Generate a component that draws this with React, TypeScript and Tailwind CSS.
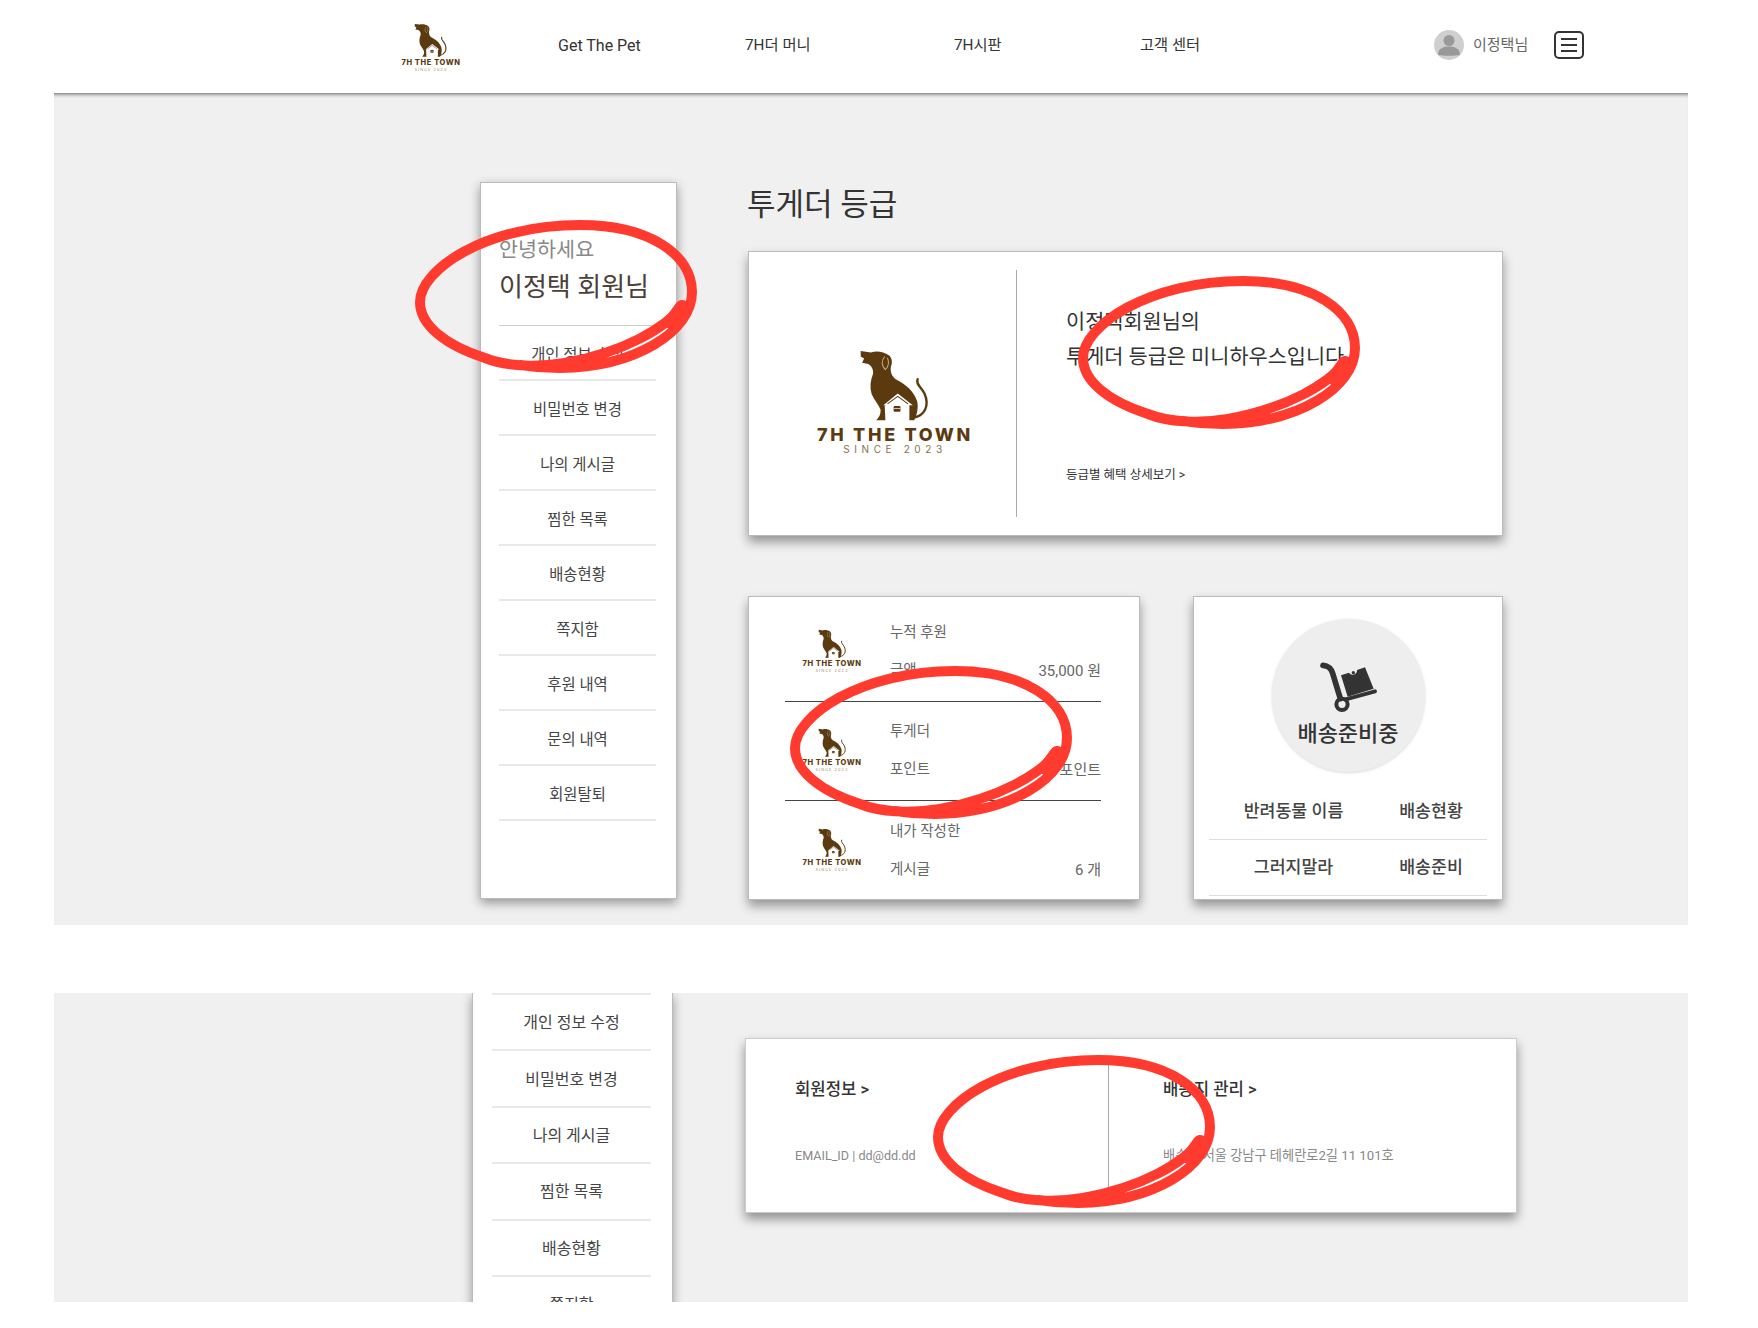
const sideMenu = ["개인 정보 수정", "비밀번호 변경", "나의 게시글", "찜한 목록", "배송현황", "쪽지함", "후원 내역", "문의 내역", "회원탈퇴"];
const lowerMenu = ["개인 정보 수정", "비밀번호 변경", "나의 게시글", "찜한 목록", "배송현황", "쪽지함"];

const stats = [
  { top: "누적 후원", label: "금액", value: "35,000 원" },
  { top: "투게더", label: "포인트", value: "0 포인트" },
  { top: "내가 작성한", label: "게시글", value: "6 개" },
];

function DogMark({ className }: { className: string }) {
  return (
    <svg viewBox="25 28 210 210" className={className}>
      <path
        fill="#5b3a10"
        d="M30 34 L60 38 C75 32 98 36 112 46 C122 54 123 68 118 80 C116 95 120 107 132 116 C160 130 186 150 195 182 C198 198 195 216 190 226 L186 236 L170 236 L170 192 L100 192 L102 236 L75 236 C82 228 88 222 88 205 C82 190 70 178 62 160 C56 140 58 120 66 100 C68 88 60 76 52 72 L34 68 L40 56 L30 50 Z"
      />
      <path fill="none" stroke="#5b3a10" strokeWidth="7" strokeLinecap="round" d="M186 228 C215 222 232 195 216 158 C206 138 190 132 196 116" />
      <path fill="none" stroke="#c9a77c" strokeWidth="3" d="M100 50 C90 60 90 78 102 88 C110 80 114 68 108 54" />
      <path fill="#fff" d="M96 192 L138 158 L182 192 L172 192 L172 236 L104 236 L104 192 Z" />
      <path fill="none" stroke="#5b3a10" strokeWidth="3" d="M108 188 L138 166 L168 188" />
      <rect x="126" y="194" width="20" height="17" rx="3" fill="#5b3a10" />
      <rect x="126" y="201" width="20" height="2" fill="#fff" />
    </svg>
  );
}

function SmallLogo({ dog }: { dog: string }) {
  return (
    <div className="flex w-[62px] flex-col items-center">
      <DogMark className={dog} />
      <p className="mt-[2px] whitespace-nowrap font-['Inter',sans-serif] text-[7.5px] leading-[8px] font-extrabold tracking-[0.6px] text-[#5b3a10]">7H THE TOWN</p>
      <p className="whitespace-nowrap font-['Inter',sans-serif] text-[4px] leading-[5px] tracking-[1px] text-[#a8906f]">SINCE 2023</p>
    </div>
  );
}

function BigLogo() {
  return (
    <div className="flex w-[170px] flex-col items-center">
      <DogMark className="mt-[-2px] h-[72px] w-[72px]" />
      <p className="mt-[4px] whitespace-nowrap font-['Inter',sans-serif] text-[18px] leading-[20px] font-extrabold tracking-[2.7px] text-[#5b3a10]">7H THE TOWN</p>
      <p className="mt-[-2px] whitespace-nowrap font-['Inter',sans-serif] text-[10px] leading-[12px] tracking-[4.6px] text-[#8a6f4a]">SINCE 2023</p>
    </div>
  );
}

// hand drawn circle, same stroke every time
function Scribble({ className }: { className: string }) {
  return (
    <svg viewBox="-5 -5 292 162" className={`pointer-events-none absolute h-[162px] w-[292px] ${className}`}>
      <path
        fill="none"
        stroke="#ff3b30"
        strokeWidth="10"
        strokeLinecap="round"
        strokeLinejoin="round"
        d="M268 86 C250 108 210 132 150 143 C120 148 90 146 70 138 C30 125 5 105 5 82 C5 50 70 5 165 5 C235 5 277 35 277 72 C277 112 220 147 145 148 C130 148 118 147 105 145"
      />
      <path fill="none" stroke="#ff3b30" strokeWidth="14" strokeLinecap="round" d="M267 87 L256 102" />
    </svg>
  );
}

function Header() {
  return (
    <header className="relative z-10 flex h-[93px] items-center bg-white pb-[4px] pl-[400px]">
      <div className="mt-[6px]">
        <SmallLogo dog="h-[34px] w-[34px]" />
      </div>
      <nav className="mt-[3px] ml-[96px] flex text-[15.300px] text-[#333]">
        <a className="w-[187px] text-[16px]">Get The Pet</a>
        <a className="w-[209px]">7H더 머니</a>
        <a className="w-[186px]">7H시판</a>
        <a className="w-[160px]">고객 센터</a>
      </nav>
      <div className="ml-[134px] flex items-center">
        <svg viewBox="0 0 30 30" className="h-[30px] w-[30px]">
          <circle cx="15" cy="15" r="15" fill="#cfcfcf" />
          <circle cx="15" cy="10.5" r="5.5" fill="#999" />
          <path d="M4 25 C4 18 10 16.5 15 16.5 C20 16.5 26 18 26 25 C20 26 10 26 4 25 Z" fill="#999" />
        </svg>
        <span className="mt-[2px] ml-[9px] text-[15px] text-[#666]">이정택님</span>
        <svg viewBox="0 0 30 28" className="ml-[26px] h-[28px] w-[30px]" fill="none" stroke="#333">
          <rect x="1" y="1" width="28" height="26" rx="4" strokeWidth="2" />
          <path d="M7 8 H23 M7 14 H23 M7 20 H23" strokeWidth="2" />
        </svg>
      </div>
    </header>
  );
}

function CartIcon() {
  return (
    <svg viewBox="0 0 225 195" className="h-[65px] w-[75px]" fill="none">
      <path d="M36 28 C52 30 60 36 65 52 L88 128" stroke="#333" strokeWidth="17" strokeLinecap="round" />
      <path d="M104 130 L192 106" stroke="#333" strokeWidth="12" strokeLinecap="round" />
      <circle cx="93" cy="145" r="17" stroke="#333" strokeWidth="12" />
      <path d="M90 58 L114 50 A13 13 0 0 0 138 42 L162 34 L188 98 L110 122 Z" fill="#333" />
      <circle cx="127" cy="50" r="5" fill="#333" />
    </svg>
  );
}

function GradeCard() {
  return (
    <div className="flex h-[285px] items-center border border-[#bbb] bg-white shadow-[0_6px_10px_rgba(0,0,0,0.38)]">
      <div className="flex w-[267px] justify-center pt-[18px] pl-[25px]">
        <BigLogo />
      </div>
      <div className="h-[247px] w-px bg-[#aaa]" />
      <div className="ml-[49px] flex h-[247px] flex-col">
        <p className="mt-[35px] text-[20.8px] leading-[35px] text-[#333]">
          이정택회원님의
          <br />
          투게더 등급은 미니하우스입니다
        </p>
        <a className="mt-[91px] text-[12.5px] leading-[18px] text-[#333]">등급별 혜택 상세보기 &gt;</a>
      </div>
    </div>
  );
}

function StatsCard() {
  return (
    <div className="h-[304px] w-[392px] border border-[#bbb] bg-white pt-[6px] pr-[38px] pl-[36px] shadow-[0_6px_10px_rgba(0,0,0,0.38)]">
      {stats.map((s, i) => (
        <div key={s.top} className={`flex h-[99px] items-center ${i < 2 ? "border-b border-[#444]" : ""}`}>
          <div className="mt-[-2px] ml-[16px] w-[89px]">
            <SmallLogo dog="h-[29px] w-[29px]" />
          </div>
          <div className="flex-1 text-[14.500px] text-[#666]">
            <p className="leading-[20px]">{s.top}</p>
            <div className="mt-[18px] flex justify-between leading-[20px]">
              <span>{s.label}</span>
              <span className="text-[15px]">{s.value}</span>
            </div>
          </div>
        </div>
      ))}
    </div>
  );
}

function DeliveryCard() {
  const rows = [
    ["반려동물 이름", "배송현황"],
    ["그러지말라", "배송준비"],
  ];
  return (
    <div className="flex h-[304px] w-[310px] flex-col items-center border border-[#bbb] bg-white px-[15px] pt-[22px] shadow-[0_6px_10px_rgba(0,0,0,0.38)]">
      <div className="flex h-[153px] w-[153px] flex-col items-center rounded-full bg-[#eee] pt-[37px] shadow-[0_1px_3px_rgba(0,0,0,0.15)]">
        <CartIcon />
        <p className="mt-[-1px] text-[22px] leading-[28px] font-medium text-[#333]">배송준비중</p>
      </div>
      <div className="mt-[12px] w-full">
        {rows.map((r) => (
          <div key={r[0]} className="flex h-[56px] items-center border-b border-[#ddd] pt-[1px] text-[17.300px] font-medium text-[#444]">
            <span className="w-[166px] pl-[3px] text-center">{r[0]}</span>
            <span className="flex-1 text-center">{r[1]}</span>
          </div>
        ))}
      </div>
    </div>
  );
}

export default function App() {
  return (
    <div className="relative h-[1328px] w-full bg-white font-['Roboto','Noto_Sans_CJK_KR',sans-serif]">
      <Header />

      <section className="mr-[70px] ml-[54px] flex h-[832px] items-start bg-[#f0f0f0] pt-[89px] pl-[426px] shadow-[inset_0_5px_4px_-4px_rgba(0,0,0,0.6)]">
        <aside className="h-[717px] w-[197px] border border-[#bbb] bg-white pr-[20px] pl-[18px] shadow-[0_4px_10px_rgba(0,0,0,0.38)]">
          <div className="flex h-[143px] flex-col border-b border-[#ccc] pt-[52px]">
            <p className="text-[20.700px] leading-[30px] text-[#888]">안녕하세요</p>
            <p className="mt-[3px] text-[26px] leading-[38px] whitespace-nowrap text-[#4a4038]">이정택 회원님</p>
          </div>
          {sideMenu.map((m) => (
            <div key={m} className="flex h-[55px] items-center justify-center border-b-2 border-[#e8e8e8] pt-[6px] text-[15.400px] text-[#444]">
              {m}
            </div>
          ))}
        </aside>

        <main className="ml-[71px] w-[755px]">
          <h1 className="mt-[1px] ml-[-1px] text-[31px] leading-[44px] font-normal text-[#333]">투게더 등급</h1>
          <div className="mt-[24px]">
            <GradeCard />
          </div>
          <div className="mt-[60px] flex justify-between">
            <StatsCard />
            <DeliveryCard />
          </div>
        </main>
      </section>

      <section className="mt-[68px] mr-[70px] ml-[54px] flex h-[309px] items-start overflow-hidden bg-[#f0f0f0] pl-[418px]">
        <aside className="h-[340px] w-[201px] border-x border-[#bbb] bg-white pr-[21px] pl-[19px] shadow-[0_4px_10px_rgba(0,0,0,0.38)]">
          <div className="border-t-2 border-[#e8e8e8]">
            {lowerMenu.map((m) => (
              <div key={m} className="flex h-[56.4px] items-center justify-center border-b-2 border-[#e8e8e8] pt-[2px] text-[16px] text-[#444]">
                {m}
              </div>
            ))}
          </div>
        </aside>
        <div className="mt-[45px] ml-[72px] flex h-[175px] w-[772px] items-center border border-[#ccc] bg-white shadow-[0_6px_10px_rgba(0,0,0,0.4)]">
          <div className="w-[362px] pb-[7px] pl-[49px]">
            <p className="text-[16.700px] leading-[22px] font-medium text-[#333]">회원정보 &gt;</p>
            <p className="mt-[45px] text-[12.600px] leading-[20px] text-[#888]">EMAIL_ID | dd@dd.dd</p>
          </div>
          <div className="h-[138px] w-px bg-[#aaa]" />
          <div className="pb-[7px] pl-[54px]">
            <p className="text-[16.700px] leading-[22px] font-medium text-[#333]">배송지 관리 &gt;</p>
            <p className="mt-[45px] text-[13.200px] leading-[20px] text-[#888]">배송지 서울 강남구 테헤란로2길 11 101호</p>
          </div>
        </div>
      </section>

      <Scribble className="top-[215px] left-[410px]" />
      <Scribble className="top-[271px] left-[1073px]" />
      <Scribble className="top-[661px] left-[785px]" />
      <Scribble className="top-[1050px] left-[928px]" />
    </div>
  );
}
